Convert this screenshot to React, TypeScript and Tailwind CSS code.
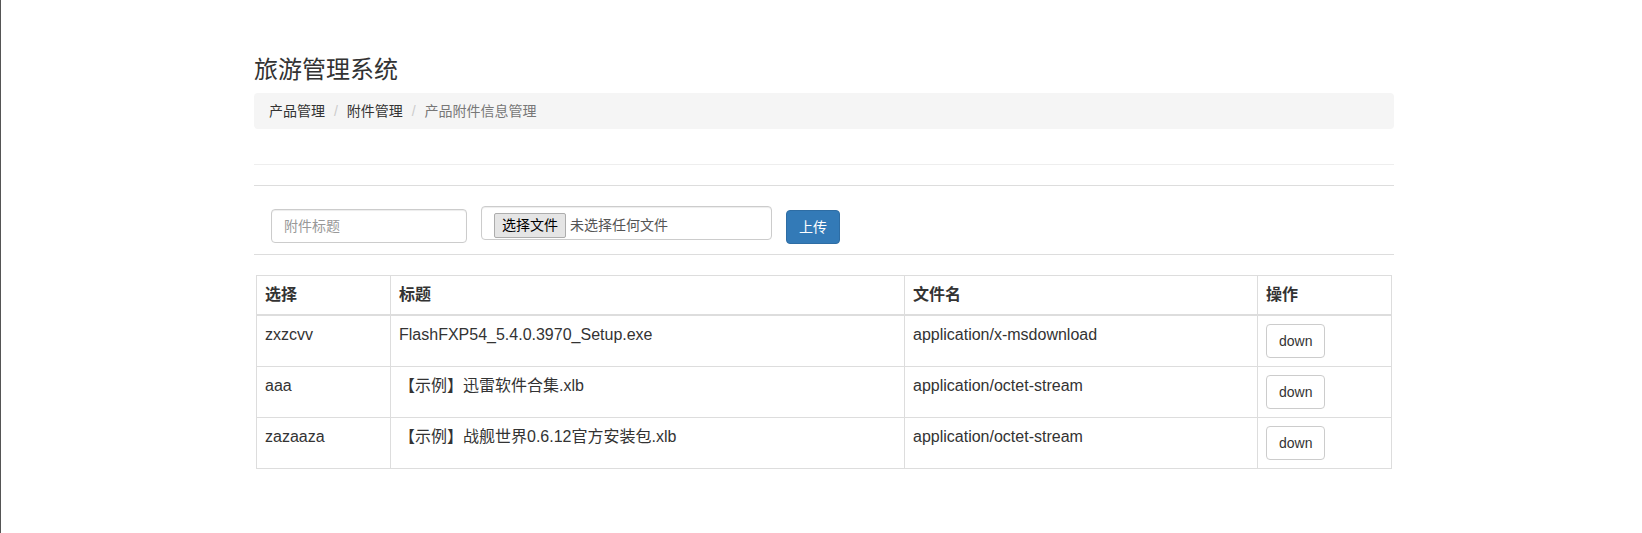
import React from "react";

const rows = [
  { id: "zxzcvv", title: "FlashFXP54_5.4.0.3970_Setup.exe", file: "application/x-msdownload" },
  { id: "aaa", title: "【示例】迅雷软件合集.xlb", file: "application/octet-stream" },
  { id: "zazaaza", title: "【示例】战舰世界0.6.12官方安装包.xlb", file: "application/octet-stream" },
];

const crumbs = ["产品管理", "附件管理", "产品附件信息管理"];

export default function App() {
  return (
    <div className="min-h-screen w-full border-l border-[#555] bg-white font-['Liberation_Sans','Noto_Sans_CJK_SC',sans-serif] text-[#333]">
      <div className="ml-[253px] w-[1140px] pt-[57px]">
        <h3 className="mb-[10px] text-[24px] font-normal leading-[26px] text-[#333]">
          旅游管理系统
        </h3>

        <ol className="flex h-[36px] items-center rounded-[4px] bg-[#f5f5f5] px-[15px] text-[14px] leading-[20px]">
          {crumbs.map((c, i) => (
            <li key={c} className="flex items-center">
              {i > 0 && (
                <span className="ml-[4px] px-[5px] text-[#ccc]">/&nbsp;</span>
              )}
              <span className={i === crumbs.length - 1 ? "text-[#777]" : "text-[#333]"}>
                {c}
              </span>
            </li>
          ))}
        </ol>

        <div className="mt-[35px] h-px bg-[#eee]" />
        <div className="mt-[20px] h-px bg-[#ddd]" />

        {/* upload form */}
        <div className="flex h-[68px] items-start pl-[17px]">
          <input
            placeholder="附件标题"
            className="mt-[23px] h-[34px] w-[196px] rounded-[4px] border border-[#ccc] px-[12px] text-[14px] text-[#555] shadow-[inset_0_1px_1px_rgba(0,0,0,0.075)] outline-none placeholder:text-[#999]"
          />
          <div className="ml-[14px] mt-[20px] flex h-[34px] w-[291px] items-start rounded-[4px] border border-[#ccc] pl-[12px] pt-[6px] text-[14px] shadow-[inset_0_1px_1px_rgba(0,0,0,0.075)]">
            <span className="flex h-[25px] w-[72px] items-center justify-center rounded-[2px] border border-[#adadad] bg-[#e5e5e5] text-[14px] text-black">
              选择文件
            </span>
            <span className="ml-[4px] leading-[25px] text-[#555]">未选择任何文件</span>
          </div>
          <button className="ml-[14px] mt-[24px] h-[34px] rounded-[4px] border border-[#2e6da4] bg-[#337ab7] px-[12px] text-[14px] text-white">
            上传
          </button>
        </div>

        <div className="h-px bg-[#ddd]" />

        <table className="ml-[2px] mt-[20px] w-[1136px] table-fixed border-collapse text-left text-[16px]">
          <thead>
            <tr>
              <th className="w-[134px] border border-b-2 border-[#ddd] p-[8px] align-bottom font-bold leading-[22px]">选择</th>
              <th className="w-[514px] border border-b-2 border-[#ddd] p-[8px] align-bottom font-bold leading-[22px]">标题</th>
              <th className="w-[353px] border border-b-2 border-[#ddd] p-[8px] align-bottom font-bold leading-[22px]">文件名</th>
              <th className="border border-b-2 border-[#ddd] p-[8px] align-bottom font-bold leading-[22px]">操作</th>
            </tr>
          </thead>
          <tbody>
            {rows.map((r) => (
              <tr key={r.id}>
                <td className="border border-[#ddd] p-[8px] align-top leading-[22.86px]">{r.id}</td>
                <td className="border border-[#ddd] p-[8px] align-top leading-[22.86px]">{r.title}</td>
                <td className="border border-[#ddd] p-[8px] align-top leading-[22.86px]">{r.file}</td>
                <td className="border border-[#ddd] p-[8px] align-top">
                  <button className="h-[34px] rounded-[4px] border border-[#ccc] bg-white px-[12px] text-[14px] text-[#333]">
                    down
                  </button>
                </td>
              </tr>
            ))}
          </tbody>
        </table>
      </div>
    </div>
  );
}
